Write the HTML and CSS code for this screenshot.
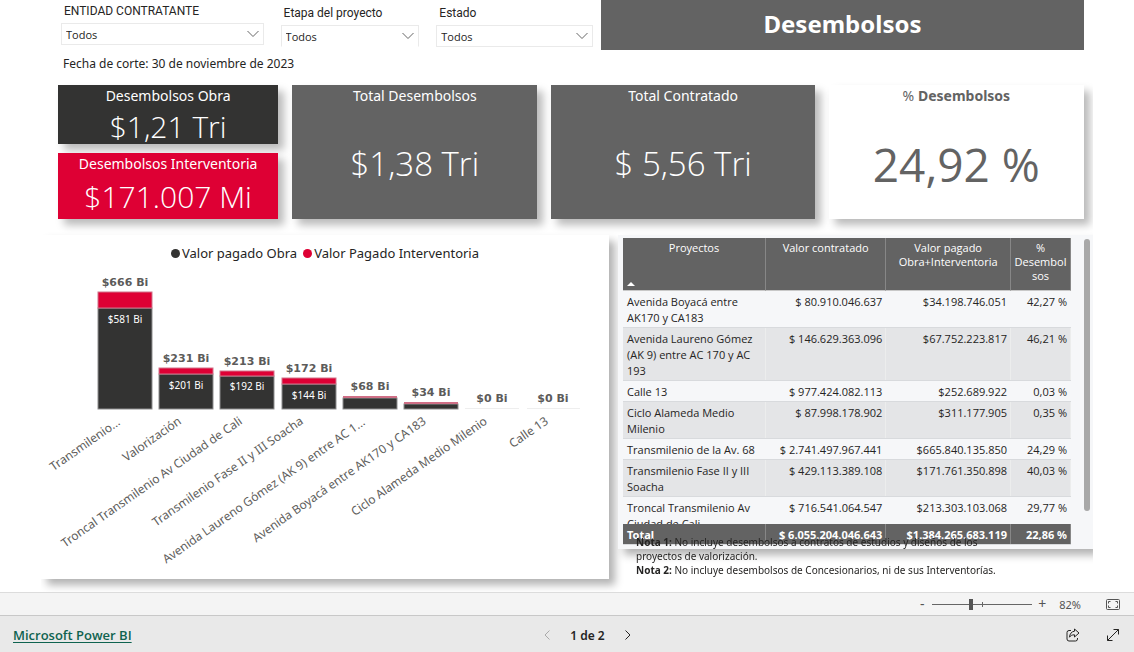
FILE: index.html
```html
<!DOCTYPE html>
<html lang="es">
<head>
<meta charset="utf-8">
<title>Desembolsos</title>
<link rel="stylesheet" href="styles.css">
</head>
<body>
<main class="report">
  <header class="top">
    <div class="filters">
      <div class="filter filter-entity">
        <label for="entidad">ENTIDAD CONTRATANTE</label>
        <div class="drop">
          <select id="entidad"><option>Todos</option></select>
          <svg class="chevron" viewBox="0 0 12 8"><path d="M.5 1 6 6.500 11.500 1"/></svg>
        </div>
      </div>
      <div class="filter filter-stage">
        <label for="etapa">Etapa del proyecto</label>
        <div class="drop open-bottom">
          <select id="etapa"><option>Todos</option></select>
          <svg class="chevron" viewBox="0 0 12 8"><path d="M.5 1 6 6.500 11.500 1"/></svg>
        </div>
      </div>
      <div class="filter filter-state">
        <label for="estado">Estado</label>
        <div class="drop">
          <select id="estado"><option>Todos</option></select>
          <svg class="chevron" viewBox="0 0 12 8"><path d="M.5 1 6 6.500 11.500 1"/></svg>
        </div>
      </div>
    </div>
    <h1 class="title">Desembolsos</h1>
  </header>
  <p class="cutoff">Fecha de corte: 30 de noviembre de 2023</p>

  <section class="cards">
    <div class="stack">
      <article class="card dark"><h2>Desembolsos Obra</h2><p class="value">$1,21 Tri</p></article>
      <article class="card red"><h2>Desembolsos Interventoria</h2><p class="value">$171.007 Mi</p></article>
    </div>
    <article class="card gray"><h2>Total Desembolsos</h2><p class="value">$1,38 Tri</p></article>
    <article class="card gray"><h2>Total Contratado</h2><p class="value">$ 5,56 Tri</p></article>
    <article class="card white"><h2><span>%</span> Desembolsos</h2><p class="value">24,92 %</p></article>
  </section>

  <section class="details">
    <div class="panel chart">
      <ul class="legend">
        <li><i class="dot dot-dark"></i>Valor pagado Obra</li>
        <li><i class="dot dot-red"></i>Valor Pagado Interventoria</li>
      </ul>
      <svg class="plot" viewBox="0 0 568 303" role="img" aria-label="Valor pagado por proyecto">
        <g class="works">
          <rect x="57" y="38" width="54" height="101"/>
          <rect x="118" y="104" width="54" height="35"/>
          <rect x="179" y="106" width="54" height="33"/>
          <rect x="241" y="114" width="54" height="25"/>
          <rect x="302" y="128" width="54" height="11"/>
          <rect x="363" y="134" width="54" height="5"/>
        </g>
        <g class="audit">
          <rect x="57" y="22" width="54" height="16"/>
          <rect x="118" y="98" width="54" height="6"/>
          <rect x="179" y="101" width="54" height="5"/>
          <rect x="241" y="108" width="54" height="6"/>
          <rect class="thin" x="302" y="126" width="54" height="2"/>
          <rect class="thin" x="363" y="132" width="54" height="2"/>
        </g>
        <path class="empty" d="M424 138.500h54M486 138.500h53"/>
        <g class="total">
          <text x="84" y="16">$666 Bi</text>
          <text x="145" y="92">$231 Bi</text>
          <text x="206" y="95">$213 Bi</text>
          <text x="268" y="102">$172 Bi</text>
          <text x="329" y="120">$68 Bi</text>
          <text x="390" y="126">$34 Bi</text>
          <text x="451" y="132">$0 Bi</text>
          <text x="512" y="132">$0 Bi</text>
        </g>
        <g class="inner">
          <text x="84" y="53">$581 Bi</text>
          <text x="145" y="119">$201 Bi</text>
          <text x="206" y="120">$192 Bi</text>
          <text x="268" y="129">$144 Bi</text>
        </g>
        <g class="axis">
          <text transform="translate(80 154) rotate(-35)">Transmilenio...</text>
          <text transform="translate(141 153) rotate(-35)">Valorización</text>
          <text transform="translate(202 153) rotate(-35)">Troncal Transmilenio Av Ciudad de Cali</text>
          <text transform="translate(263 153) rotate(-35)">Transmilenio Fase II y III Soacha</text>
          <text transform="translate(325 154) rotate(-35)">Avenida Laureno Gómez (AK 9) entre AC 1...</text>
          <text transform="translate(386 153) rotate(-35)">Avenida Boyacá entre AK170 y CA183</text>
          <text transform="translate(447 153) rotate(-35)">Ciclo Alameda Medio Milenio</text>
          <text transform="translate(508 153) rotate(-35)">Calle 13</text>
        </g>
      </svg>
    </div>

    <div class="side">
      <div class="panel projects">
        <div class="viewport">
          <table>
            <colgroup><col class="c-name"><col class="c-contract"><col class="c-paid"><col class="c-pct"></colgroup>
            <thead>
              <tr><th class="sorted">Proyectos<svg class="sort" viewBox="0 0 8 4"><path d="M0 4 4 0l4 4z"/></svg></th><th>Valor contratado</th><th>Valor pagado Obra+Interventoria</th><th>%<br>Desembol<br>sos</th></tr>
            </thead>
            <tbody>
              <tr><td>Avenida Boyacá entre<br>AK170 y CA183</td><td>$ 80.910.046.637</td><td>$34.198.746.051</td><td>42,27 %</td></tr>
              <tr><td>Avenida Laureno Gómez<br>(AK 9) entre AC 170 y AC<br>193</td><td>$ 146.629.363.096</td><td>$67.752.223.817</td><td>46,21 %</td></tr>
              <tr><td>Calle 13</td><td>$ 977.424.082.113</td><td>$252.689.922</td><td>0,03 %</td></tr>
              <tr><td>Ciclo Alameda Medio<br>Milenio</td><td>$ 87.998.178.902</td><td>$311.177.905</td><td>0,35 %</td></tr>
              <tr><td>Transmilenio de la Av. 68</td><td>$ 2.741.497.967.441</td><td>$665.840.135.850</td><td>24,29 %</td></tr>
              <tr><td>Transmilenio Fase II y III<br>Soacha</td><td>$ 429.113.389.108</td><td>$171.761.350.898</td><td>40,03 %</td></tr>
              <tr><td>Troncal Transmilenio Av<br>Ciudad de Cali</td><td>$ 716.541.064.547</td><td>$213.303.103.068</td><td>29,77 %</td></tr>
            </tbody>
            <tfoot>
              <tr><td>Total</td><td>$ 6.055.204.046.643</td><td>$1.384.265.683.119</td><td>22,86 %</td></tr>
            </tfoot>
          </table>
        </div>
        <div class="scrollbar"><div class="handle"></div></div>
      </div>
      <div class="notes">
        <p><b>Nota 1:</b> No incluye desembolsos a contratos de estudios y diseños de los<br>proyectos de valorización.</p>
        <p><b>Nota 2:</b> No incluye desembolsos de Concesionarios, ni de sus Interventorías.</p>
      </div>
    </div>
  </section>
</main>

<div class="zoombar">
  <button type="button" class="step" aria-label="Alejar">-</button>
  <input class="slider" type="range" min="0" max="100" value="38" aria-label="Zoom">
  <button type="button" class="step" aria-label="Acercar">+</button>
  <span class="level">82%</span>
  <button type="button" class="fit" aria-label="Ajustar a la página">
    <svg viewBox="0 0 14 11"><rect x=".5" y=".5" width="13" height="10" rx="1"/><path d="M2.500 4.500v-2h2M9.500 2.500h2v2M11.500 6.500v2h-2M4.500 8.500h-2v-2"/></svg>
  </button>
</div>

<footer class="footer">
  <a href="#">Microsoft Power BI</a>
  <nav class="pager">
    <button type="button" class="prev" aria-label="Anterior"><svg viewBox="0 0 6 10"><path d="M5.500.5 1 5l4.500 4.500"/></svg></button>
    <span>1 de 2</span>
    <button type="button" aria-label="Siguiente"><svg viewBox="0 0 6 10"><path d="M.5.500 5 5 .5 9.500"/></svg></button>
  </nav>
  <div class="actions">
    <button type="button" aria-label="Compartir"><svg viewBox="0 0 14 14"><path d="M5 2.500H3a2 2 0 0 0-2 2V11a2 2 0 0 0 2 2h6.500a2 2 0 0 0 2-2v-1M8.500 1l4.500 4-4.500 4V6.800C6 6.800 4.500 7.600 3.500 9.200 3.700 6 5.500 3.500 8.500 3.200z"/></svg></button>
    <button type="button" aria-label="Pantalla completa"><svg viewBox="0 0 14 14"><path d="M1.500 12.500l11-11M7.500 1.500h5v5M1.500 7.500v5h5"/></svg></button>
  </div>
</footer>
</body>
</html>
```

FILE: styles.css
```css
* { box-sizing: border-box; }
body {
  margin: 0;
  min-height: 100vh;
  display: flex;
  flex-direction: column;
  background: #fff;
  color: #252423;
  font-family: "Noto Sans", "Open Sans", sans-serif;
  font-size: 12px;
}
h1, h2, p, ul { margin: 0; padding: 0; font-weight: 400; }
button { border: 0; padding: 0; background: none; color: inherit; font: inherit; cursor: pointer; display: flex; align-items: center; justify-content: center; }
svg { display: block; fill: none; }

.report { flex: 1; margin: 0 41px; overflow: hidden; }

.top { display: grid; grid-template-columns: 532fr 483fr; gap: 8px; height: 50px; padding: 0 9px 0 20px; }
.filters { display: grid; grid-template-columns: 203fr 139fr 157fr; column-gap: 17px; align-items: start; }
.filter { padding-top: 6px; }
.filter-entity { padding-top: 4px; }
.filter label { display: block; height: 19px; padding-left: 3px; font: 12px/15px Roboto, sans-serif; white-space: nowrap; }
.drop { display: flex; align-items: center; position: relative; border: 1px solid #eaeaea; height: 22px; }
.open-bottom { border-bottom-color: transparent; }
.drop select { appearance: none; width: 100%; border: 0; background: none; padding: 2px 4px 0; color: inherit; font: 11px/16px "Open Sans", sans-serif; }
.chevron { position: absolute; right: 4px; width: 12px; height: 8px; stroke: #666; pointer-events: none; }
.title { background: #636363; color: #fff; font-size: 24px; font-weight: 700; line-height: 48px; text-align: center; }
.cutoff { padding: 5px 22px 0; height: 35px; font-size: 12px; line-height: 17px; }

.cards { display: grid; grid-template-columns: 220fr 245fr 263fr 255fr; gap: 14px; padding: 0 9px 0 17px; height: 134px; }
.stack { display: grid; grid-template-rows: 59px 66px; gap: 9px; }
.card { display: flex; flex-direction: column; color: #fff; text-align: center; box-shadow: 6px 6px 8px rgba(0, 0, 0, .27); }
.card h2 { font-size: 14px; line-height: 22px; }
.card .value { flex: 1; display: flex; align-items: center; justify-content: center; font-family: "Open Sans", sans-serif; font-size: 33px; font-weight: 300; line-height: 40px; padding-top: 2px; }
.stack .value { font-size: 30px; padding-top: 0; }
.dark { background: #333332; }
.red { background: #de0034; }
.gray { background: #636363; }
.white { background: #fff; color: #636363; }
.white h2 { font-weight: 700; }
.white h2 span { font-weight: 400; }
.white .value { font-size: 46px; font-weight: 400; }

.details { display: grid; grid-template-columns: 568fr 475fr; gap: 9px; padding: 16px 0 13px; }
.panel { background: #fff; box-shadow: 6px 6px 8px rgba(0, 0, 0, .3); }
.chart { padding: 8px 0 6px; }
.legend { display: flex; justify-content: center; gap: 6px; list-style: none; font-size: 13px; line-height: 20px; }
.legend li { display: flex; align-items: center; gap: 2px; }
.dot { width: 9px; height: 9px; border-radius: 50%; }
.dot-dark { background: #333332; }
.dot-red { background: #de0034; }
.plot { width: 100%; margin-top: 7px; font-family: "Noto Sans", "Open Sans", sans-serif; }
.works rect { fill: #333332; stroke: #8e8e8e; stroke-width: 1px; }
.audit rect { fill: #de0034; stroke: #d0758a; stroke-width: 1px; }
.audit .thin { stroke: none; fill: #cf6f86; }
.empty { stroke: #eee; }
.total { fill: #5c5b5a; font: 700 11px "DejaVu Sans", sans-serif; text-anchor: middle; }
.inner { fill: #fff; font-size: 10px; text-anchor: middle; }
.axis { fill: #605e5c; font-size: 12px; text-anchor: end; }

.projects { display: flex; justify-content: space-between; gap: 8px; background: #f6f7f9; padding: 3px 3px 3px 5px; height: 314px; }
.viewport { flex: 1; max-width: 448px; height: 307px; overflow: hidden; font-family: "Open Sans", sans-serif; }
table { width: 100%; table-layout: fixed; border-collapse: separate; border-spacing: 0; }
.c-name { width: 143px; }
.c-contract { width: 27%; }
.c-paid { width: 28%; }
.c-pct { width: 60px; }
th { position: relative; height: 53px; padding: 3px 2px; background: #636363; color: #fff; font-size: 11px; font-weight: 400; line-height: 14px; vertical-align: top; border-right: 1px solid #878787; border-bottom: 1px solid #c8c8c8; }
.sort { position: absolute; left: 4px; bottom: 4px; width: 8px; height: 4px; fill: #fff; }
td { padding: 3px 4px 1px; font-size: 11px; line-height: 16px; text-align: right; vertical-align: top; white-space: nowrap; border-bottom: 1px solid #d8dadd; }
td:first-child { text-align: left; }
tbody tr:nth-child(even) td { background: #e4e5e7; box-shadow: inset -1px 0 #eceded; }
tfoot td { position: sticky; bottom: 0; background: #636363; color: #fff; font-family: "Noto Sans", sans-serif; font-weight: 700; box-shadow: inset -1px 0 #878787; }
.scrollbar { width: 6px; }
.handle { height: 272px; margin-top: 1px; border-radius: 3px; background: #a8a8a8; }
.notes { position: relative; margin-top: -14px; padding-left: 18px; font-size: 10px; line-height: 14px; }

.zoombar { display: flex; align-items: center; height: 23px; padding: 0 14px 0 0; justify-content: flex-end; border-top: 1px solid #dcdcdc; background: #f4f4f4; color: #555; }
.step { width: 14px; font-size: 14px; line-height: 20px; }
.slider { appearance: none; width: 100px; height: 11px; margin: 0 3px; background: linear-gradient(#666, #666) 50px 3px / 1px 5px no-repeat, linear-gradient(#666, #666) 0 5px / 100% 1px no-repeat; }
.slider::-webkit-slider-thumb { appearance: none; width: 4px; height: 11px; background: #555; }
.level { margin: 0 25px 0 10px; font-size: 11px; }
.fit svg { width: 14px; height: 11px; stroke: #555; }

.footer { display: grid; grid-template-columns: 1fr auto 1fr; align-items: center; height: 37px; padding: 2px 14px 0 13px; border-top: 1px solid #c8c8c8; background: #e9e9e9; }
.footer a { color: #0f6350; font-family: "Open Sans", sans-serif; font-size: 13px; font-weight: 600; text-underline-offset: 2px; }
.pager { display: flex; align-items: center; gap: 20px; margin-right: -42px; font-weight: 600; }
.pager svg { width: 6px; height: 10px; stroke: #252423; }
.pager .prev svg { stroke: #aaa; }
.actions { display: flex; justify-content: flex-end; gap: 26px; }
.actions svg { width: 14px; height: 14px; stroke: #252423; }
```
